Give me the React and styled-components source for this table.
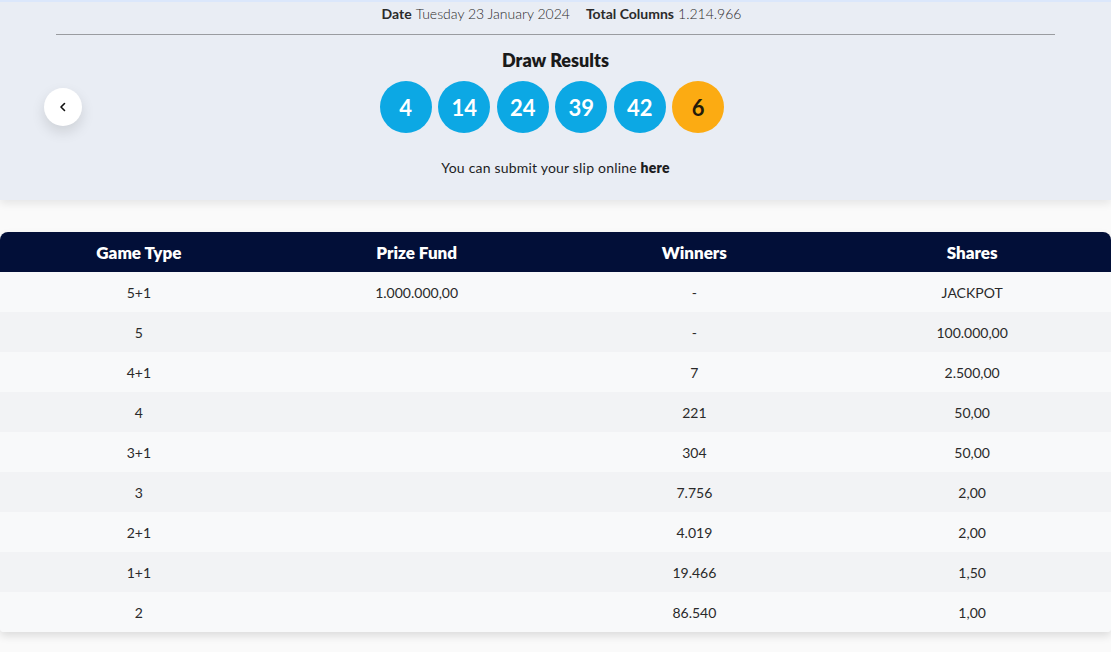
import React from 'react';
import styled, { createGlobalStyle } from 'styled-components';

const GlobalStyle = createGlobalStyle`
  html, body {
    margin: 0;
    padding: 0;
    background: #fafafa;
    font-family: Lato, "Open Sans", sans-serif;
    color: #1d1d1f;
  }
`;

const Page = styled.div`
  width: 1111px;
  height: 652px;
  overflow: hidden;
  display: flex;
  flex-direction: column;
`;

const Hero = styled.section`
  position: relative;
  height: 200px;
  background: #e9edf4;
  border-top: 2px solid #dbe7fb;
  box-sizing: border-box;
  box-shadow: 0 4px 8px rgba(0, 0, 0, 0.08);
  display: flex;
  flex-direction: column;
  align-items: center;
`;

const InfoLine = styled.div`
  height: 22px;
  display: flex;
  gap: 16px;
  align-items: center;
  font-size: 14px;
  color: #2b2b2b;
  font-weight: 300;
  margin-left: 12px;
  b {
    font-weight: 700;
    margin-right: 4px;
  }
`;

const Rule = styled.hr`
  width: 999px;
  margin: 10px 0 0;
  border: 0;
  border-top: 1px solid #9a9ca0;
`;

const Title = styled.h2`
  margin: 14px 0 0;
  font-size: 18px;
  font-weight: 800;
  color: #1a1a1a;
  line-height: 22px;
`;

const Balls = styled.div`
  display: flex;
  gap: 6.5px;
  margin-top: 10px;
  margin-right: 7px;
`;

const Ball = styled.div`
  width: 52px;
  height: 52px;
  border-radius: 50%;
  background: ${(p) => (p.$bonus ? '#fcab12' : '#0ca8e4')};
  color: ${(p) => (p.$bonus ? '#231a0a' : '#ffffff')};
  display: flex;
  align-items: center;
  justify-content: center;
  font-size: 22px;
  font-weight: 700;
`;

const Submit = styled.p`
  margin: 26px 0 0;
  font-size: 14px;
  color: #1d1d1f;
  letter-spacing: 0.2px;
  b {
    font-weight: 800;
  }
`;

const BackButton = styled.button`
  position: absolute;
  left: 44px;
  top: 86px;
  width: 38px;
  height: 38px;
  border-radius: 50%;
  border: 0;
  background: #ffffff;
  box-shadow: 0 6px 14px rgba(0, 0, 0, 0.12);
  display: flex;
  align-items: center;
  justify-content: center;
  padding: 0;
  cursor: pointer;
`;

const Table = styled.div`
  margin-top: 32px;
  border-radius: 8px 8px 4px 4px;
  overflow: hidden;
  box-shadow: 0 4px 8px rgba(0, 0, 0, 0.12);
`;

const Row = styled.div`
  display: grid;
  grid-template-columns: repeat(4, 1fr);
  height: 40px;
  align-items: center;
  text-align: center;
  background: ${(p) => (p.$head ? '#020f38' : p.$alt ? '#f2f3f5' : '#f8f9fa')};
  color: ${(p) => (p.$head ? '#ffffff' : '#2a2a2a')};
  font-size: ${(p) => (p.$head ? '17px' : '14px')};
  font-weight: ${(p) => (p.$head ? 800 : 400)};
`;

const rows = [
  ['5+1', '1.000.000,00', '-', 'JACKPOT'],
  ['5', '', '-', '100.000,00'],
  ['4+1', '', '7', '2.500,00'],
  ['4', '', '221', '50,00'],
  ['3+1', '', '304', '50,00'],
  ['3', '', '7.756', '2,00'],
  ['2+1', '', '4.019', '2,00'],
  ['1+1', '', '19.466', '1,50'],
  ['2', '', '86.540', '1,00'],
];

export default function App() {
  return (
    <Page>
      <GlobalStyle />
      <Hero>
        <InfoLine>
          <span><b>Date</b>Tuesday 23 January 2024</span>
          <span><b>Total Columns</b>1.214.966</span>
        </InfoLine>
        <Rule />
        <Title>Draw Results</Title>
        <Balls>
          {[4, 14, 24, 39, 42].map((n) => (
            <Ball key={n}>{n}</Ball>
          ))}
          <Ball $bonus>6</Ball>
        </Balls>
        <Submit>
          You can submit your slip online <b>here</b>
        </Submit>
        <BackButton aria-label="Previous">
          <svg width="12" height="12" viewBox="0 0 12 12" fill="none">
            <path d="M7.5 2.5 L4 6 L7.5 9.5" stroke="#111" strokeWidth="1.6" strokeLinecap="round" strokeLinejoin="round" />
          </svg>
        </BackButton>
      </Hero>
      <Table>
        <Row $head>
          <span>Game Type</span>
          <span>Prize Fund</span>
          <span>Winners</span>
          <span>Shares</span>
        </Row>
        {rows.map((r, i) => (
          <Row key={i} $alt={i % 2 === 1}>
            {r.map((c, j) => (
              <span key={j}>{c}</span>
            ))}
          </Row>
        ))}
      </Table>
    </Page>
  );
}
